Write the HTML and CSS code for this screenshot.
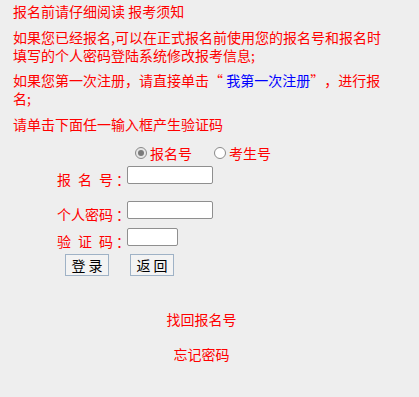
FILE: index.html
```html
<!DOCTYPE html>
<html lang="zh-CN">
<head>
<meta charset="utf-8">
<title>报名登录</title>
<link rel="stylesheet" href="styles.css">
</head>
<body>
<div class="wrap">
  <p class="note">报名前请仔细阅读 报考须知</p>
  <p class="note note-tight">如果您已经报名,可以在正式报名前使用您的报名号和报名时填写的个人密码登陆系统修改报考信息;</p>
  <p class="note">如果您第一次注册，请直接单击“ <a class="note-link" href="#">我第一次注册</a>”，进行报名;</p>
  <p class="note note-last">请单击下面任一输入框产生验证码</p>
  <form class="login">
    <div class="radios">
      <label class="opt"><input class="radio" type="radio" name="kind" checked>报名号</label>
      <label class="opt opt-second"><input class="radio" type="radio" name="kind">考生号</label>
    </div>
    <div class="row r1">
      <label class="lbl"><span class="sp">报名</span>号<span class="colon">：</span></label>
      <input class="inp" type="text">
    </div>
    <div class="row r2">
      <label class="lbl">个人密码<span class="colon">：</span></label>
      <input class="inp" type="password">
    </div>
    <div class="row r3">
      <label class="lbl"><span class="sp">验证</span>码<span class="colon">：</span></label>
      <input class="inp inp-short" type="text">
    </div>
    <div class="btns">
      <button class="btn" type="button">登 录</button>
      <button class="btn" type="button">返 回</button>
    </div>
  </form>
  <div class="links">
    <a class="link" href="#">找回报名号</a>
    <a class="link" href="#">忘记密码</a>
  </div>
</div>
</body>
</html>
```
FILE: styles.css
```css
html, body {
  margin: 0;
  padding: 0;
  background: #eeeeee;
}
body {
  font-family: "Noto Sans CJK SC", "Microsoft YaHei", sans-serif;
  font-size: 14px;
  line-height: 18px;
  color: #ff0000;
  text-spacing-trim: space-all;
}
.wrap {
  width: 377px;
  margin-left: 13px;
  padding-top: 2px;
}
.note {
  margin: 0 0 8px;
}
.note-tight {
  margin-bottom: 7px;
}
.note-last {
  margin-bottom: 0;
}
.note-link {
  color: #0000ff;
  text-decoration: none;
}
.login {
  margin: 11px 0 0;
}
.radios {
  display: flex;
  align-items: center;
  height: 18px;
  padding-left: 122px;
}
.opt {
  display: flex;
  align-items: center;
}
.opt-second {
  margin-left: 22px;
}
.radio {
  -webkit-appearance: none;
  appearance: none;
  box-sizing: border-box;
  width: 12px;
  height: 12px;
  margin: 0 3px 0 0;
  border: 1px solid #8a8a8a;
  border-radius: 50%;
  background: #ffffff;
  position: relative;
}
.radio:checked {
  background: #e6e6e6;
}
.radio:checked::after {
  content: "";
  position: absolute;
  left: 2px;
  top: 2px;
  width: 6px;
  height: 6px;
  border-radius: 50%;
  background: #7a7a7a;
}
.row {
  display: flex;
  align-items: flex-start;
  padding-left: 44px;
}
.r1 {
  margin-top: 4px;
  height: 35px;
}
.r2 {
  height: 27px;
}
.r3 {
  height: 26px;
}
.lbl {
  flex: none;
  width: 70px;
  padding-top: 4px;
  white-space: nowrap;
}
.sp {
  letter-spacing: 7px;
}
.colon {
  padding-left: 3px;
  margin-right: -3px;
}
.inp {
  box-sizing: border-box;
  width: 86px;
  height: 18px;
  margin: 0;
  padding: 1px 2px;
  border: 1px solid #8f8f8f;
  border-radius: 2px;
  background: #ffffff;
  font: inherit;
  font-size: 13px;
}
.inp-short {
  width: 51px;
}
.btns {
  display: flex;
  gap: 21px;
  padding-left: 52px;
}
.btn {
  box-sizing: border-box;
  width: 44px;
  height: 22px;
  margin: 0;
  padding: 0;
  border: 1px solid #9fb2c6;
  background: #f3f3f3;
  color: #000000;
  font-family: "Noto Sans CJK SC", "Microsoft YaHei", sans-serif;
  font-size: 14px;
  line-height: 18px;
}
.links {
  margin-top: 34px;
  display: flex;
  flex-direction: column;
  align-items: center;
  gap: 17px;
}
.link {
  color: #ff0000;
  text-decoration: none;
}
```
